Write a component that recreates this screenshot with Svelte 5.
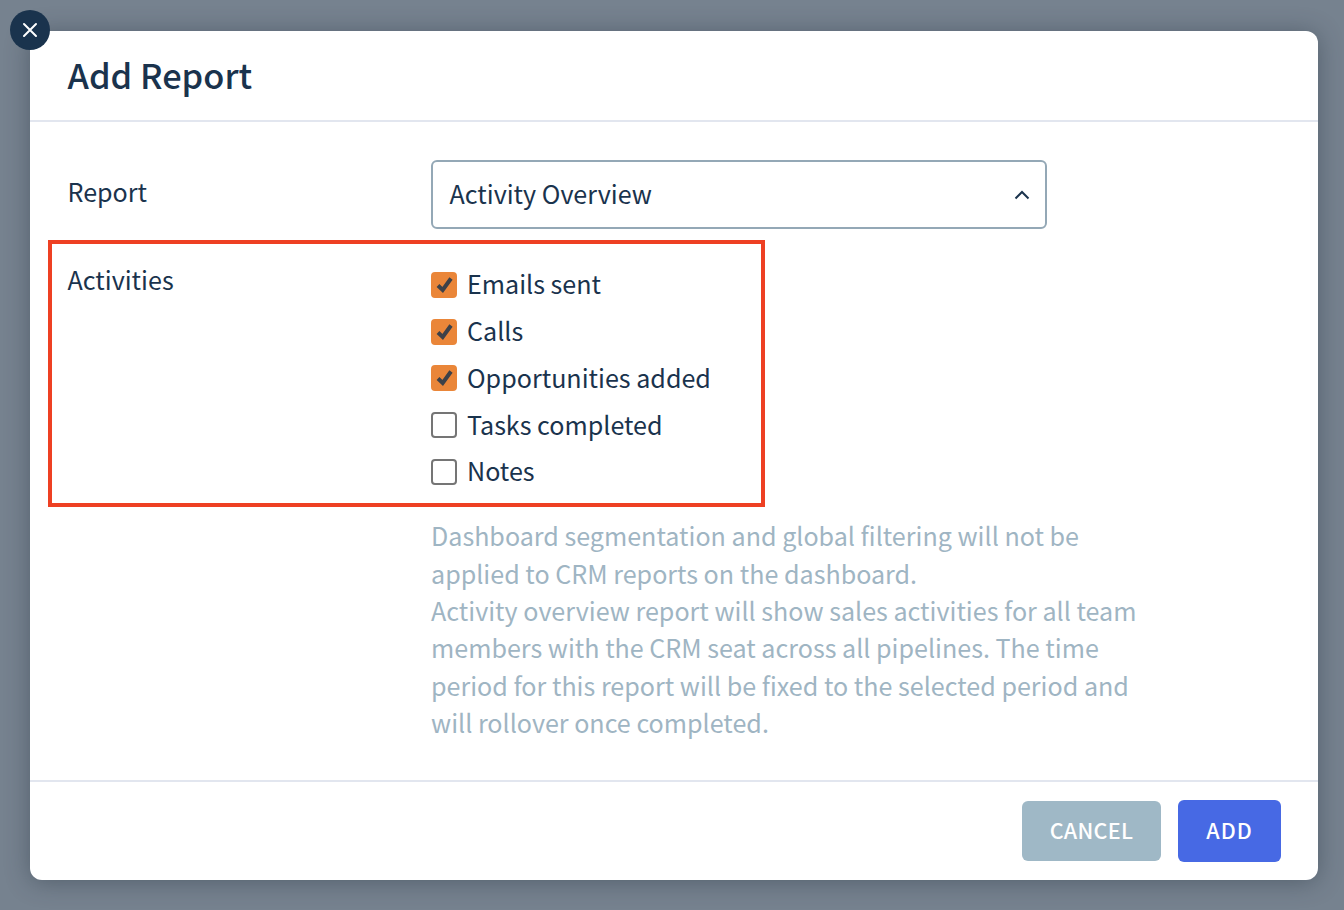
<script>
  const activities = [
    { label: 'Emails sent', checked: true },
    { label: 'Calls', checked: true },
    { label: 'Opportunities added', checked: true },
    { label: 'Tasks completed', checked: false },
    { label: 'Notes', checked: false }
  ];
</script>

<div class="page">
  <div class="modal">
    <button class="close" aria-label="Close">
      <svg width="16" height="16" viewBox="0 0 16 16"><path d="M2 2l12 12M14 2L2 14" stroke="#fff" stroke-width="2" stroke-linecap="round" /></svg>
    </button>

    <header class="head"><h2>Add Report</h2></header>

    <div class="body">
      <div class="row report">
        <span class="label">Report</span>
        <div class="select">
          <span class="value">Activity Overview</span>
          <svg width="16" height="10" viewBox="0 0 16 10"><path d="M1.5 8.5L8 2l6.5 6.5" fill="none" stroke="#1a334d" stroke-width="2" /></svg>
        </div>
      </div>

      <div class="row activities">
        <span class="label">Activities</span>
        <div class="list">
          {#each activities as item}
            <div class="item">
              <span class="box" class:on={item.checked}>
                {#if item.checked}
                  <svg width="22" height="22" viewBox="0 0 22 22"><path d="M5 11.5L9.7 16 18 4.5" fill="none" stroke="#3d4148" stroke-width="4" /></svg>
                {/if}
              </span>
              <span class="text">{item.label}</span>
            </div>
          {/each}
        </div>
        <div class="highlight"></div>
      </div>

      <p class="note">
        Dashboard segmentation and global filtering will not be<br />
        applied to CRM reports on the dashboard.<br />
        Activity overview report will show sales activities for all team<br />
        members with the CRM seat across all pipelines. The time<br />
        period for this report will be fixed to the selected period and<br />
        will rollover once completed.
      </p>
    </div>

    <footer class="foot">
      <button class="btn cancel">CANCEL</button>
      <button class="btn add">ADD</button>
    </footer>
  </div>
</div>

<style>
  :global(body) {
    margin: 0;
    background: #76828f;
  }

  .page {
    height: 910px;
    box-sizing: border-box;
    padding: 31px 26px 30px 30px;
    font-family: "Noto Sans CJK SC", "Noto Sans", sans-serif;
    color: #1a334d;
  }

  .modal {
    position: relative;
    height: 849px;
    display: flex;
    flex-direction: column;
    background: #fff;
    border-radius: 12px;
    box-shadow: 0 2px 24px rgba(40, 50, 65, 0.45);
  }

  .close {
    position: absolute;
    left: -20px;
    top: -21px;
    width: 40px;
    height: 40px;
    padding: 0;
    border: 0;
    border-radius: 50%;
    background: #1a334d;
    display: flex;
    align-items: center;
    justify-content: center;
  }

  .head {
    height: 91px;
    flex: none;
    box-sizing: border-box;
    border-bottom: 2px solid #e2e6ef;
    padding: 0 37.5px 4px;
    display: flex;
    align-items: center;
  }

  h2 {
    margin: 0;
    font-size: 34.4px;
    font-weight: 500;
  }

  .body {
    flex: 1;
    padding: 38px 37.5px 0;
    font-size: 25.1px;
  }

  .row {
    display: flex;
    position: relative;
  }

  .label {
    width: 363.5px;
    flex: none;
  }

  .report .label {
    line-height: 62px;
  }

  .select {
    width: 616px;
    height: 69px;
    box-sizing: border-box;
    border: 2px solid #94a8b6;
    border-radius: 6px;
    padding: 0 15px 0 16.5px;
    display: flex;
    align-items: center;
    justify-content: space-between;
  }

  .value {
    margin-bottom: 3px;
  }

  .activities {
    margin-top: 32px;
  }

  .activities .label {
    line-height: 36px;
  }

  .list {
    display: flex;
    flex-direction: column;
    padding-top: 0.5px;
  }

  .item {
    height: 46.75px;
    display: flex;
    align-items: center;
    gap: 10px;
  }

  .text {
    margin-bottom: 3px;
  }

  .box {
    width: 26px;
    height: 26px;
    box-sizing: border-box;
    border: 2px solid #757575;
    border-radius: 4px;
    display: flex;
    align-items: center;
    justify-content: center;
  }

  .box.on {
    background: #ea8639;
    border-color: #ea8639;
  }

  .highlight {
    position: absolute;
    left: -19.5px;
    top: -21px;
    width: 717px;
    height: 267px;
    box-sizing: border-box;
    border: 4px solid #ee4023;
    pointer-events: none;
  }

  .note {
    margin: 22px 0 0 363.5px;
    color: #9fb5c3;
    font-size: 25.1px;
    line-height: 37.4px;
  }

  .foot {
    height: 100px;
    flex: none;
    box-sizing: border-box;
    border-top: 2px solid #e2e6ef;
    padding: 0 37px 0 0;
    display: flex;
    align-items: center;
    justify-content: flex-end;
    gap: 17px;
  }

  .btn {
    border: 0;
    border-radius: 6px;
    padding: 0 0 4px;
    color: #fff;
    font-family: inherit;
    font-size: 21.5px;
    font-weight: 500;
    letter-spacing: 0.3px;
  }

  .cancel {
    width: 139px;
    height: 60px;
    background: #9fb8c6;
  }

  .add {
    width: 103px;
    height: 62px;
    background: #4769e4;
    letter-spacing: 1px;
  }
</style>
